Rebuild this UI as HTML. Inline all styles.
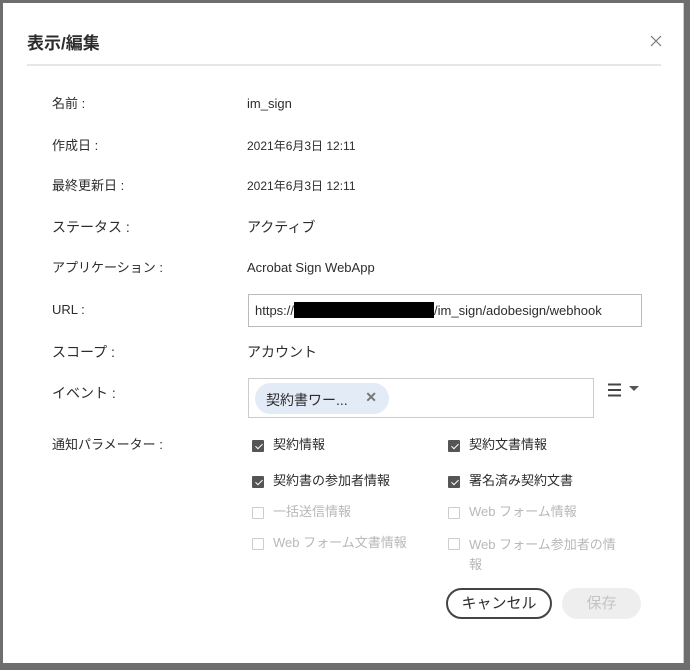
<!DOCTYPE html>
<html><head><meta charset="utf-8"><style>
*{margin:0;padding:0;box-sizing:border-box}
body{width:690px;height:670px;background:#6e6e6e;position:relative;overflow:hidden;font-family:"Liberation Sans","Noto Sans CJK JP",sans-serif;color:#2c2c2c;font-size:13px}
.dlg{position:absolute;left:3px;top:3px;width:681px;height:660px;background:#fff;border-right:1px solid #ccc}
.t{position:absolute;left:27px;top:29px;font-size:17px;font-weight:bold;color:#2c2c2c}
.hr{position:absolute;left:27px;top:64px;width:634px;height:2px;background:#e6e6e6}
.a{position:absolute;white-space:nowrap;line-height:16px}
.l{left:52px}.v{left:247px}
.inp{position:absolute;left:248px;top:294px;width:394px;height:33px;border:1px solid #bbb;padding:7px 6px;font-size:13px}
.red{display:inline-block;width:140px;height:16px;background:#000;vertical-align:-3px}
.ev{position:absolute;left:248px;top:378px;width:346px;height:40px;border:1px solid #ccc}
.tag{position:absolute;left:6px;top:4px;width:134px;height:31px;background:#e3ebf7;border-radius:16px;padding:7px 11px;font-size:14px}
.tag span{position:absolute;right:12px;top:6px;color:#777;font-weight:bold}
.cb{position:absolute;width:12px;height:12px;border:1px solid #aaa;border-radius:1px}
.cb.on{background:#555;border-color:#555}
.cb.on:after{content:"";position:absolute;left:3.5px;top:0.5px;width:3px;height:6px;border:solid #fff;border-width:0 1.5px 1.5px 0;transform:rotate(45deg)}
.g{color:#b8b8b8}
.btn{position:absolute;top:588px;height:31px;border-radius:16px;font-size:15px;text-align:center;line-height:27px}
</style></head><body>
<div class="dlg"></div>
<div class="t">表示/編集</div>
<svg style="position:absolute;left:650px;top:35px" width="12" height="12" viewBox="0 0 12 12"><path d="M1 1L11 11M11 1L1 11" stroke="#777" stroke-width="1.2"/></svg>
<div class="hr"></div>
<div class="a l" style="top:96px">名前 :</div><div class="a v" style="top:96px">im_sign</div>
<div class="a l" style="top:138px">作成日 :</div><div class="a v" style="top:138px;font-size:12px">2021年6月3日 12:11</div>
<div class="a l" style="top:178px">最終更新日 :</div><div class="a v" style="top:178px;font-size:12px">2021年6月3日 12:11</div>
<div class="a l" style="top:219px;font-size:14px">ステータス :</div><div class="a v" style="top:219px;font-size:14px">アクティブ</div>
<div class="a l" style="top:260px">アプリケーション :</div><div class="a v" style="top:260px">Acrobat Sign WebApp</div>
<div class="a l" style="top:302px">URL :</div>
<div class="inp">https://<span class="red"></span>/im_sign/adobesign/webhook</div>
<div class="a l" style="top:344px;font-size:14px">スコープ :</div><div class="a v" style="top:344px;font-size:14px">アカウント</div>
<div class="a l" style="top:385px;font-size:14px">イベント :</div>
<div class="ev"><div class="tag">契約書ワー...<span>✕</span></div></div>
<svg style="position:absolute;left:608px;top:383px" width="34" height="14" viewBox="0 0 34 14"><path d="M0 1.5H13M0 7H13M0 12.5H13" stroke="#444" stroke-width="2"/><path d="M21 3H31L26 8Z" fill="#555"/></svg>
<div class="a l" style="top:437px">通知パラメーター :</div>
<div class="cb on" style="left:252px;top:440px"></div><div class="a" style="left:273px;top:437px">契約情報</div>
<div class="cb on" style="left:448px;top:440px"></div><div class="a" style="left:469px;top:437px">契約文書情報</div>
<div class="cb on" style="left:252px;top:476px"></div><div class="a" style="left:273px;top:473px">契約書の参加者情報</div>
<div class="cb on" style="left:448px;top:476px"></div><div class="a" style="left:469px;top:473px">署名済み契約文書</div>
<div class="cb" style="left:252px;top:507px;border-color:#ccc"></div><div class="a g" style="left:273px;top:504px">一括送信情報</div>
<div class="cb" style="left:448px;top:507px;border-color:#ccc"></div><div class="a g" style="left:469px;top:504px">Web フォーム情報</div>
<div class="cb" style="left:252px;top:538px;border-color:#ccc"></div><div class="a g" style="left:273px;top:535px">Web フォーム文書情報</div>
<div class="cb" style="left:448px;top:538px;border-color:#ccc"></div><div class="a g" style="left:469px;top:535px;line-height:20px">Web フォーム参加者の情<br>報</div>
<div class="btn" style="left:446px;width:106px;border:2px solid #444">キャンセル</div>
<div class="btn" style="left:562px;width:79px;background:#eee;color:#c4c4c4;line-height:31px">保存</div>
</body></html>
